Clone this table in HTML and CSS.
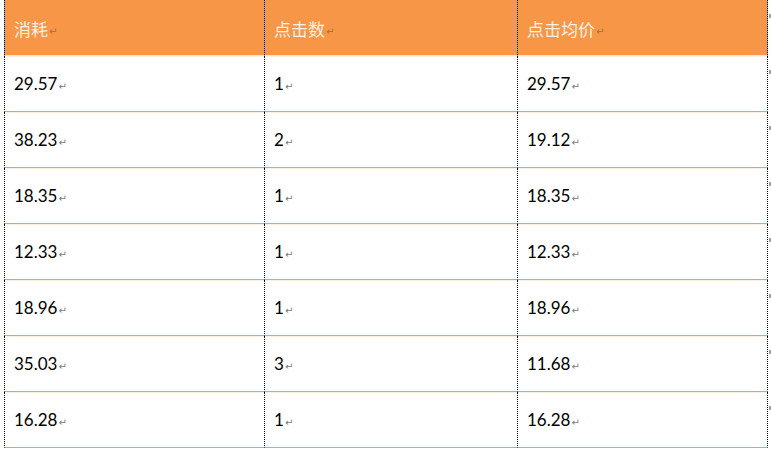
FILE: index.html
```html
<!DOCTYPE html>
<html lang="zh-CN">
<head>
<meta charset="utf-8">
<title>点击数据</title>
<link rel="stylesheet" href="styles.css">
</head>
<body>
<div class="sheet">
  <div class="cell head first"><span class="txt">消耗</span><span class="pm">↵</span></div>
  <div class="cell head"><span class="txt">点击数</span><span class="pm">↵</span></div>
  <div class="cell head"><span class="txt">点击均价</span><span class="pm">↵</span></div>
  <div class="endmark"></div>

  <div class="cell first"><span class="txt">29.57</span><span class="pm">↵</span></div>
  <div class="cell"><span class="txt">1</span><span class="pm">↵</span></div>
  <div class="cell"><span class="txt">29.57</span><span class="pm">↵</span></div>
  <div class="endmark"></div>

  <div class="cell first"><span class="txt">38.23</span><span class="pm">↵</span></div>
  <div class="cell"><span class="txt">2</span><span class="pm">↵</span></div>
  <div class="cell"><span class="txt">19.12</span><span class="pm">↵</span></div>
  <div class="endmark"></div>

  <div class="cell first"><span class="txt">18.35</span><span class="pm">↵</span></div>
  <div class="cell"><span class="txt">1</span><span class="pm">↵</span></div>
  <div class="cell"><span class="txt">18.35</span><span class="pm">↵</span></div>
  <div class="endmark"></div>

  <div class="cell first"><span class="txt">12.33</span><span class="pm">↵</span></div>
  <div class="cell"><span class="txt">1</span><span class="pm">↵</span></div>
  <div class="cell"><span class="txt">12.33</span><span class="pm">↵</span></div>
  <div class="endmark"></div>

  <div class="cell first"><span class="txt">18.96</span><span class="pm">↵</span></div>
  <div class="cell"><span class="txt">1</span><span class="pm">↵</span></div>
  <div class="cell"><span class="txt">18.96</span><span class="pm">↵</span></div>
  <div class="endmark"></div>

  <div class="cell first"><span class="txt">35.03</span><span class="pm">↵</span></div>
  <div class="cell"><span class="txt">3</span><span class="pm">↵</span></div>
  <div class="cell"><span class="txt">11.68</span><span class="pm">↵</span></div>
  <div class="endmark"></div>

  <div class="cell first"><span class="txt">16.28</span><span class="pm">↵</span></div>
  <div class="cell"><span class="txt">1</span><span class="pm">↵</span></div>
  <div class="cell"><span class="txt">16.28</span><span class="pm">↵</span></div>
  <div class="endmark"></div>
</div>
</body>
</html>
```

FILE: styles.css
```css
html, body {
  margin: 0;
  padding: 0;
  background: #ffffff;
  overflow: hidden;
}

body {
  font-family: Lato, "Noto Sans CJK SC", sans-serif;
  color: #000000;
}

.sheet {
  display: grid;
  grid-template-columns: 261px 253px 250px 3px;
  grid-auto-rows: 56px;
  margin-left: 4px;
  width: 767px;
}

.cell {
  box-sizing: border-box;
  display: flex;
  align-items: center;
  padding-left: 9px;
  border-right: 1px dotted #000000;
  border-bottom: 1px solid #e3a26a;
  background: #ffffff;
  box-shadow: inset 0 1px 0 #fdeee2;
}

.cell.first {
  border-left: 1px dotted #000000;
}

.cell.head {
  height: 57px;
  background: #f79646;
  box-shadow: inset 0 -1px 0 #fde4cf;
  color: #fdf1e4;
  padding-top: 2px;
}

.sheet > .cell.head {
  align-self: start;
}

.txt {
  font-size: 17px;
  line-height: 20px;
}

.head .txt {
  font-family: "Noto Sans CJK SC", sans-serif;
  font-size: 17px;
  font-weight: 400;
}

.pm {
  font-family: "DejaVu Sans", sans-serif;
  font-size: 10px;
  color: #7a7a7a;
  margin-left: 1px;
  margin-top: 5px;
}

.head .pm {
  color: #a6714a;
}

.endmark {
  position: relative;
}

.endmark::before {
  content: "";
  position: absolute;
  left: 1px;
  top: 14px;
  width: 2px;
  height: 4px;
  background: #a0a0a0;
}
```
